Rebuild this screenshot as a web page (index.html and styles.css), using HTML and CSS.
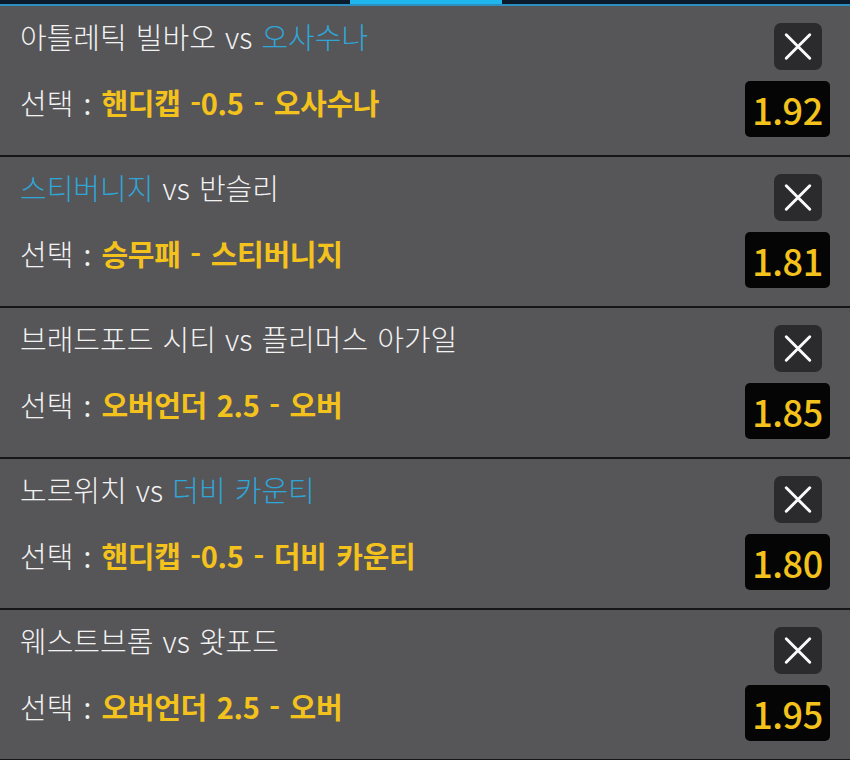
FILE: index.html
```html
<!DOCTYPE html>
<html lang="ko">
<head>
<meta charset="utf-8">
<title>베팅 카트</title>
<link rel="stylesheet" href="styles.css">
</head>
<body>
<div class="topbar">
  <div class="tab"></div>
  <div class="tab active"></div>
  <div class="tab"></div>
</div>
<ul class="slip">
  <li class="bet">
    <div class="info">
      <div class="match">아틀레틱 빌바오 vs <span class="pick">오사수나</span></div>
      <div class="choice">선택 <span class="colon">:</span> <b>핸디캡 -0.5 - 오사수나</b></div>
    </div>
    <div class="side">
      <button class="remove" aria-label="삭제"><svg viewBox="0 0 48 48"><path d="M12 12L36 36M36 12L12 36"/></svg></button>
      <div class="odds">1.92</div>
    </div>
  </li>
  <li class="bet">
    <div class="info">
      <div class="match"><span class="pick">스티버니지</span> vs 반슬리</div>
      <div class="choice">선택 <span class="colon">:</span> <b>승무패 - 스티버니지</b></div>
    </div>
    <div class="side">
      <button class="remove" aria-label="삭제"><svg viewBox="0 0 48 48"><path d="M12 12L36 36M36 12L12 36"/></svg></button>
      <div class="odds">1.81</div>
    </div>
  </li>
  <li class="bet">
    <div class="info">
      <div class="match">브래드포드 시티 vs 플리머스 아가일</div>
      <div class="choice">선택 <span class="colon">:</span> <b>오버언더 2.5 - 오버</b></div>
    </div>
    <div class="side">
      <button class="remove" aria-label="삭제"><svg viewBox="0 0 48 48"><path d="M12 12L36 36M36 12L12 36"/></svg></button>
      <div class="odds">1.85</div>
    </div>
  </li>
  <li class="bet">
    <div class="info">
      <div class="match">노르위치 vs <span class="pick">더비 카운티</span></div>
      <div class="choice">선택 <span class="colon">:</span> <b>핸디캡 -0.5 - 더비 카운티</b></div>
    </div>
    <div class="side">
      <button class="remove" aria-label="삭제"><svg viewBox="0 0 48 48"><path d="M12 12L36 36M36 12L12 36"/></svg></button>
      <div class="odds">1.80</div>
    </div>
  </li>
  <li class="bet">
    <div class="info">
      <div class="match">웨스트브롬 vs 왓포드</div>
      <div class="choice">선택 <span class="colon">:</span> <b>오버언더 2.5 - 오버</b></div>
    </div>
    <div class="side">
      <button class="remove" aria-label="삭제"><svg viewBox="0 0 48 48"><path d="M12 12L36 36M36 12L12 36"/></svg></button>
      <div class="odds">1.95</div>
    </div>
  </li>
</ul>
</body>
</html>
```
FILE: styles.css
```css
* { box-sizing: border-box; }

html, body {
  margin: 0;
  padding: 0;
  height: 100%;
}

body {
  background: #565558;
  font-family: "Noto Sans CJK KR", "Noto Sans", sans-serif;
  color: #f2f2f2;
  overflow: hidden;
}

.topbar {
  display: flex;
  height: 6px;
  background: #0c1b2c;
  border-bottom: 2px solid #2b8fbf;
}

.tab { flex: 0 0 350px; }
.tab:last-child { flex: 1; }
.tab.active {
  flex: 0 0 152px;
  background: #1fb6ee;
}

.slip {
  list-style: none;
  margin: 0;
  padding: 0;
}

.bet {
  display: flex;
  justify-content: space-between;
  height: 151px;
  padding: 0 20px 0 20px;
  border-bottom: 2px solid #161616;
}

.info {
  display: flex;
  flex-direction: column;
  padding-top: 11px;
}

.match {
  font-size: 29px;
  font-weight: 300;
  line-height: 38px;
  word-spacing: 1px;
  white-space: nowrap;
}

.pick { color: #2fa6d8; }

.choice {
  margin-top: 28px;
  font-size: 29px;
  font-weight: 300;
  line-height: 38px;
  word-spacing: 2px;
  white-space: nowrap;
}

.colon {
  font-family: "Noto Sans", sans-serif;
  font-weight: 400;
}

.choice b {
  color: #f4c21c;
  font-weight: 700;
  letter-spacing: -0.3px;
}

.side {
  display: flex;
  flex-direction: column;
  align-items: flex-end;
  padding-top: 17px;
  gap: 11px;
}

.remove {
  width: 48px;
  height: 47px;
  margin-right: 8px;
  padding: 0;
  border: 0;
  border-radius: 7px;
  background: #2b2b2d;
  display: flex;
  align-items: center;
  justify-content: center;
}

.remove svg {
  width: 48px;
  height: 47px;
  fill: none;
  stroke: #fafafa;
  stroke-width: 3;
  stroke-linecap: round;
}

.odds {
  width: 85px;
  height: 56px;
  border-radius: 5px;
  background: #050505;
  color: #f4c21c;
  font-size: 36px;
  font-weight: 500;
  line-height: 56px;
  text-align: center;
  letter-spacing: -0.5px;
}
```
